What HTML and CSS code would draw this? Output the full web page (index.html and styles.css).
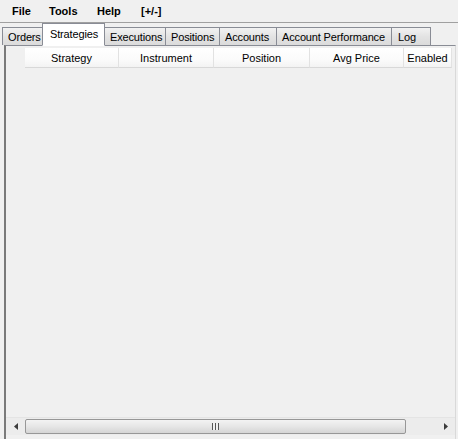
FILE: index.html
```html
<!DOCTYPE html>
<html>
<head>
<meta charset="utf-8">
<link rel="stylesheet" href="styles.css">
</head>
<body>
<div class="menubar">
  <span class="menu m-file">File</span>
  <span class="menu m-tools">Tools</span>
  <span class="menu m-help">Help</span>
  <span class="menu m-pm">[+/-]</span>
</div>
<div class="tabstrip">
  <div class="tab t-orders">Orders</div>
  <div class="tab active t-strat">Strategies</div>
  <div class="tab t-exec">Executions</div>
  <div class="tab t-pos">Positions</div>
  <div class="tab t-acc">Accounts</div>
  <div class="tab t-perf">Account Performance</div>
  <div class="tab t-log">Log</div>
</div>
<div class="panel">
  <div class="grid">
    <div class="header">
      <div class="corner"></div>
      <div class="col c1">Strategy</div>
      <div class="col c2">Instrument</div>
      <div class="col c3">Position</div>
      <div class="col c4">Avg Price</div>
      <div class="col c5">Enabled</div>
    </div>
    <div class="rows"></div>
    <div class="hscroll">
      <div class="arrow left"><svg width="4" height="7" viewBox="0 0 4 7"><path d="M4 0 L0 3.5 L4 7 Z" fill="#3c3c3c"/></svg></div>
      <div class="thumb"><span class="grip"></span></div>
      <div class="track"></div>
      <div class="arrow right"><svg width="4" height="7" viewBox="0 0 4 7"><path d="M0 0 L4 3.5 L0 7 Z" fill="#3c3c3c"/></svg></div>
    </div>
  </div>
</div>
</body>
</html>
```
FILE: styles.css
```css
html, body {
  margin: 0;
  padding: 0;
}
body {
  width: 458px;
  height: 439px;
  background: #f0f0f0;
  font-family: "Liberation Sans", Arial, sans-serif;
  font-size: 11px;
  color: #000;
  overflow: hidden;
}
.menubar {
  height: 22px;
  display: flex;
  align-items: center;
  padding-left: 12px;
  border-bottom: 1px solid #a0a0a0;
  box-sizing: border-box;
  height: 23px;
}
.menu {
  font-weight: bold;
  font-size: 11px;
}
.m-file { width: 37px; }
.m-tools { width: 48px; }
.m-help { width: 44px; }
.tabstrip {
  height: 22px;
  display: flex;
  align-items: flex-end;
  padding-left: 2px;
  position: relative;
  z-index: 1;
}
.tab {
  box-sizing: border-box;
  height: 18px;
  border: 1px solid #898c95;
  border-bottom: none;
  background: linear-gradient(#f2f2f2, #e3e3e3 50%, #dbdbdb);
  padding: 3px 0 0 5px;
  white-space: nowrap;
  margin-right: -1px;
  letter-spacing: -0.15px;
}
.tab.active {
  height: 22px;
  background: #fff;
  padding-top: 4px;
  padding-left: 7px;
  margin-left: -1px;
  margin-right: -1px;
  position: relative;
  z-index: 2;
  border-bottom: 1px solid #fff;
  height: 23px;
  margin-bottom: -1px;
}
.t-orders { width: 42px; }
.t-strat { width: 63px; }
.t-exec { width: 62px; padding-left: 5px; }
.t-pos { width: 55px; }
.t-acc { width: 58px; }
.t-perf { width: 116px; }
.t-log { width: 40px; padding-left: 6px; }
.panel {
  height: 394px;
  margin: 0 2px 0 4px;
  border-top: 1px solid #898c95;
  border-right: 1px solid #d9d9d9;
  border-left: 2px solid #7a7a7a;
  box-sizing: border-box;
  background: #f0f0f0;
}
.grid {
  display: flex;
  flex-direction: column;
  height: 390px;
  padding-top: 2px;
  box-sizing: border-box;
}
.header {
  height: 20px;
  display: flex;
  flex: none;
}
.corner {
  width: 19px;
  flex: none;
  background: #f0f0f0;
}
.col {
  box-sizing: border-box;
  height: 20px;
  background: linear-gradient(#ffffff, #fbfbfb 60%, #f3f3f3);
  border-right: 1px solid #e2e2e2;
  border-bottom: 1px solid #d8d8d8;
  text-align: center;
  padding-top: 4px;
  flex: none;
}
.c1 { width: 94px; }
.c2 { width: 95px; }
.c3 { width: 96px; }
.c4 { width: 94px; }
.c5 { width: 48px; }
.rows {
  flex: 1;
}
.hscroll {
  height: 17px;
  flex: none;
  display: flex;
  align-items: stretch;
  background: #ececec;
  border-top: 1px solid #e4e4e4;
  margin-bottom: 1px;
}
.arrow {
  width: 19px;
  flex: none;
  display: flex;
  align-items: center;
  justify-content: center;
}
.arrow.left { padding-left: 0; }
.thumb {
  width: 381px;
  flex: none;
  box-sizing: border-box;
  border: 1px solid #979797;
  border-radius: 2px;
  background: linear-gradient(#f3f3f3, #e6e6e6 50%, #d5d5d5);
  margin: 1px 0;
  display: flex;
  align-items: center;
  justify-content: center;
}
.grip {
  width: 7px;
  height: 7px;
  background: repeating-linear-gradient(90deg, #555 0 1px, #f0f0f0 1px 3px);
}
.track {
  flex: 1;
}
```
